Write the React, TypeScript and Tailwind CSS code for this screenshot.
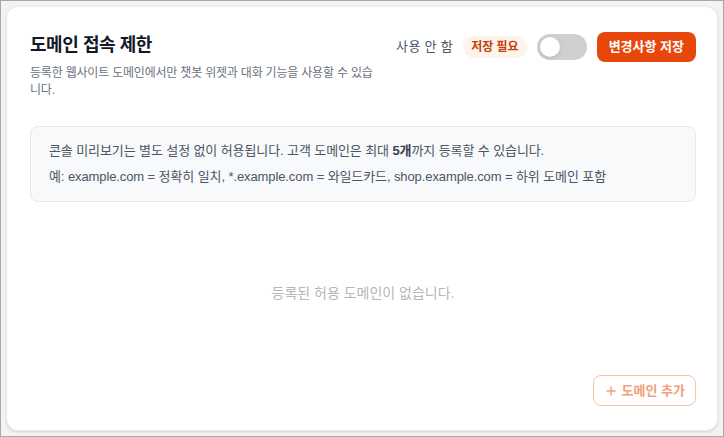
import React, { useState } from 'react';
import { Plus } from 'lucide-react';

const App: React.FC = () => {
  const [enabled, setEnabled] = useState(false);
  const domains: string[] = [];

  return (
    <div
      className="w-[724px] h-[437px] border border-[#a8a8a8] bg-[#f3f3f4] p-[5px] box-border"
      style={{ fontFamily: '"Liberation Sans", "Noto Sans CJK KR", sans-serif' }}
    >
      <div className="h-full bg-white rounded-xl border border-[#ececee] shadow-sm flex flex-col pl-[23px] pr-[21px] pt-6 pb-6">
        {/* HEADER */}
        <div className="flex items-start justify-between gap-2">
          <div className="max-w-[348px]">
            <h1 className="text-[18px] leading-7 font-bold text-[#111827] tracking-tight">도메인 접속 제한</h1>
            <p className="mt-1.5 text-[12px] leading-[17px] text-[#6b7280] tracking-[-0.2px]">
              등록한 웹사이트 도메인에서만 챗봇 위젯과 대화 기능을 사용할 수 있습니다.
            </p>
          </div>
          <div className="flex items-center gap-2.5 pt-[1px] shrink-0 whitespace-nowrap">
            <span className="text-[13px] text-[#4b5563] tracking-wide">사용 안 함</span>
            <span className="px-2 h-[22px] flex items-center rounded-full bg-[#fff4eb] text-[12px] font-bold text-[#c2410c]">저장 필요</span>
            <button
              onClick={() => setEnabled(!enabled)}
              className={`w-[50px] h-[26px] rounded-full p-[3px] flex items-center ${enabled ? 'bg-[#e8470b] justify-end' : 'bg-[#cfcfcf] justify-start'}`}
            >
              <span className="w-5 h-5 rounded-full bg-white shadow-sm" />
            </button>
            <button className="h-[30px] px-3 rounded-lg bg-[#e8470b] text-white text-[13px] font-bold">
              변경사항 저장
            </button>
          </div>
        </div>

        {/* INFO BOX */}
        <div className="mt-[27px] rounded-lg border border-[#e5e7eb] bg-[#f8f9fb] px-[18px] py-[15px] text-[13px] text-[#4b5563] leading-[18px] tracking-[-0.1px] space-y-[8px]">
          <p>
            콘솔 미리보기는 별도 설정 없이 허용됩니다. 고객 도메인은 최대 <span className="font-bold text-[#374151]">5개</span>까지 등록할 수 있습니다.
          </p>
          <p>예: example.com = 정확히 일치, *.example.com = 와일드카드, shop.example.com = 하위 도메인 포함</p>
        </div>

        {/* EMPTY STATE */}
        <div className="flex-1 flex items-center justify-center">
          {domains.length === 0 && (
            <p className="text-[14px] text-[#b3b7bd] mt-[10px]">등록된 허용 도메인이 없습니다.</p>
          )}
        </div>

        {/* FOOTER */}
        <div className="flex justify-end">
          <button
            disabled
            className="h-[31px] px-2.5 flex items-center gap-1 rounded-lg border border-[#f8c3aa] text-[#f2a07d] text-[13px] font-semibold"
          >
            <Plus size={14} strokeWidth={2.5} />
            도메인 추가
          </button>
        </div>
      </div>
    </div>
  );
};

export default App;
